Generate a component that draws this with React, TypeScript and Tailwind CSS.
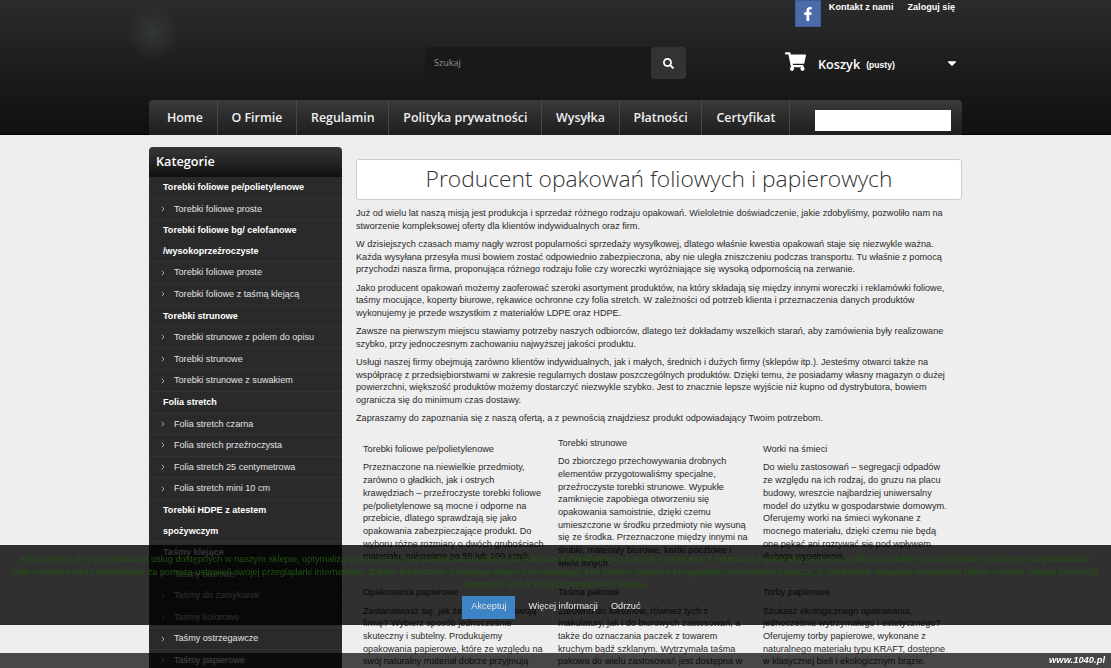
import { FaFacebookF, FaSearch, FaShoppingCart, FaCaretDown } from 'react-icons/fa';
import { ChevronRight } from 'lucide-react';

const NAV = ['Home', 'O Firmie', 'Regulamin', 'Polityka prywatności', 'Wysyłka', 'Płatności', 'Certyfikat'];

const CATEGORIES: { label: string; top?: boolean }[] = [
	{ label: 'Torebki foliowe pe/polietylenowe', top: true },
	{ label: 'Torebki foliowe proste' },
	{ label: 'Torebki foliowe bg/ celofanowe /wysokoprzeźroczyste', top: true },
	{ label: 'Torebki foliowe proste' },
	{ label: 'Torebki foliowe z taśmą klejącą' },
	{ label: 'Torebki strunowe', top: true },
	{ label: 'Torebki strunowe z polem do opisu' },
	{ label: 'Torebki strunowe' },
	{ label: 'Torebki strunowe z suwakiem' },
	{ label: 'Folia stretch', top: true },
	{ label: 'Folia stretch czarna' },
	{ label: 'Folia stretch przeźroczysta' },
	{ label: 'Folia stretch 25 centymetrowa' },
	{ label: 'Folia stretch mini 10 cm' },
	{ label: 'Torebki HDPE z atestem spożywczym', top: true },
	{ label: 'Taśmy klejące', top: true },
	{ label: 'Taśmy biurowe' },
	{ label: 'Taśmy do zamykarek' },
	{ label: 'Taśmy kolorowe' },
	{ label: 'Taśmy ostrzegawcze' },
	{ label: 'Taśmy papierowe' },
];

const INTRO = [
	'Już od wielu lat naszą misją jest produkcja i sprzedaż różnego rodzaju opakowań. Wieloletnie doświadczenie, jakie zdobyliśmy, pozwoliło nam na stworzenie kompleksowej oferty dla klientów indywidualnych oraz firm.',
	'W dzisiejszych czasach mamy nagły wzrost popularności sprzedaży wysyłkowej, dlatego właśnie kwestia opakowań staje się niezwykle ważna. Każda wysyłana przesyła musi bowiem zostać odpowiednio zabezpieczona, aby nie uległa zniszczeniu podczas transportu. Tu właśnie z pomocą przychodzi nasza firma, proponująca różnego rodzaju folie czy woreczki wyróżniające się wysoką odpornością na zerwanie.',
	'Jako producent opakowań możemy zaoferować szeroki asortyment produktów, na który składają się między innymi woreczki i reklamówki foliowe, taśmy mocujące, koperty biurowe, rękawice ochronne czy folia stretch. W zależności od potrzeb klienta i przeznaczenia danych produktów wykonujemy je przede wszystkim z materiałów LDPE oraz HDPE.',
	'Zawsze na pierwszym miejscu stawiamy potrzeby naszych odbiorców, dlatego też dokładamy wszelkich starań, aby zamówienia były realizowane szybko, przy jednoczesnym zachowaniu najwyższej jakości produktu.',
	'Usługi naszej firmy obejmują zarówno klientów indywidualnych, jak i małych, średnich i dużych firmy (sklepów itp.). Jesteśmy otwarci także na współpracę z przedsiębiorstwami w zakresie regularnych dostaw poszczególnych produktów. Dzięki temu, że posiadamy własny magazyn o dużej powierzchni, większość produktów możemy dostarczyć niezwykle szybko. Jest to znacznie lepsze wyjście niż kupno od dystrybutora, bowiem ogranicza się do minimum czas dostawy.',
	'Zapraszamy do zapoznania się z naszą ofertą, a z pewnością znajdziesz produkt odpowiadający Twoim potrzebom.',
];

const PRODUCTS = [
	{
		title: 'Torebki foliowe pe/polietylenowe',
		text: 'Przeznaczone na niewielkie przedmioty, zarówno o gładkich, jak i ostrych krawędziach – przeźroczyste torebki foliowe pe/polietylenowe są mocne i odporne na przebicie, dlatego sprawdzają się jako opakowania zabezpieczające produkt. Do wyboru różne rozmiary o dwóch grubościach materiału, pakowane po 50 lub 100 sztuk.',
	},
	{
		title: 'Torebki strunowe',
		text: 'Do zbiorczego przechowywania drobnych elementów przygotowaliśmy specjalne, przeźroczyste torebki strunowe. Wypukłe zamknięcie zapobiega otworzeniu się opakowania samoistnie, dzięki czemu umieszczone w środku przedmioty nie wysuną się ze środka. Przeznaczone między innymi na śrubki, materiały biurowe, kartki pocztowe i wiele innych.',
	},
	{
		title: 'Worki na śmieci',
		text: 'Do wielu zastosowań – segregacji odpadów ze względu na ich rodzaj, do gruzu na placu budowy, wreszcie najbardziej uniwersalny model do użytku w gospodarstwie domowym. Oferujemy worki na śmieci wykonane z mocnego materiału, dzięki czemu nie będą one pękać ani rozrywać się pod wpływem dużego wypełnienia.',
	},
	{
		title: 'Opakowania papierowe',
		text: 'Zastanawiasz się, jak zareklamować swoją firmę? Wybierz sposób jednocześnie skuteczny i subtelny. Produkujemy opakowania papierowe, które ze względu na swój naturalny materiał dobrze przyjmują nadruk z logo.',
	},
	{
		title: 'Taśma pakowa',
		text: 'Zarówno do kartonów, również tych z makulatury, jak i do biurowych zastosowań, a także do oznaczania paczek z towarem kruchym bądź szklanym. Wytrzymała taśma pakowa do wielu zastosowań jest dostępna w wielu wariantach.',
	},
	{
		title: 'Torby papierowe',
		text: 'Szukasz ekologicznego opakowania, jednocześnie wytrzymałego i estetycznego? Oferujemy torby papierowe, wykonane z naturalnego materiału typu KRAFT, dostępne w klasycznej bieli i ekologicznym brązie.',
	},
];

const arial = "font-['Liberation_Sans',Arial,sans-serif]";
const openSans = "font-['Open_Sans',sans-serif]";

const Header = () => (
	<header className="relative h-[135px] border-b border-black bg-gradient-to-b from-[#2b2b2b] to-[#101010]">
		<div className="absolute left-[125px] top-[5px] h-[55px] w-[55px] rounded-full bg-[radial-gradient(circle,#333835_0%,transparent_70%)]" />
		<div className="relative mx-auto w-[813px]">
			<div className={`flex h-[47px] items-start justify-end ${arial}`}>
				<div className="flex h-[27px] w-[26px] items-center justify-center border border-[#3f5c98] bg-[#4b6aa8] text-white">
					<FaFacebookF className="h-[14px] w-[14px]" />
				</div>
				<div className="flex h-[15px] items-center whitespace-nowrap text-[9.1px] font-bold text-white">
					<span className="border-r border-[#2c2c2c] pl-[8px] pr-[7px] leading-[15px]">Kontakt z nami</span>
					<span className="border-r border-[#2c2c2c] pl-[6px] pr-[6px] leading-[15px]">Zaloguj się</span>
				</div>
			</div>
			<div className="flex h-[53px] items-start">
				<div className="ml-[276px] flex h-[32px] w-[226px] items-center rounded-l-[4px] bg-[#191919] pl-[9px] text-[9px] text-[#8a8a8a]">
					Szukaj
				</div>
				<div className="flex h-[32px] w-[35px] items-center justify-center rounded-[4px] bg-[#333333] text-white">
					<FaSearch className="h-[11px] w-[11px]" />
				</div>
				<div className="ml-[99px] flex h-[32px] w-[172px] items-center text-white">
					<FaShoppingCart className="mb-[3px] h-[19px] w-[21px]" />
					<span className={`ml-[12px] mt-[3px] text-[12.7px] font-semibold ${openSans}`}>Koszyk</span>
					<span className={`ml-[6px] mt-[5px] text-[8.6px] font-bold ${arial}`}>(pusty)</span>
					<FaCaretDown className="ml-auto mb-[1px] h-[14px] w-[10px]" />
				</div>
			</div>
			<nav className="flex h-[35px] items-stretch rounded-t-[4px] bg-gradient-to-b from-[#3a3a3a] to-[#1e1e1e]">
				{NAV.map((item, i) => (
					<a
						key={item}
						className={`flex items-center whitespace-nowrap border-r border-[#484848] pr-[13.7px] pt-[2px] text-[12.4px] font-semibold text-[#f0f0f0] ${openSans} ${i === 0 ? 'pl-[18px]' : 'pl-[14px]'}`}
					>
						{item}
					</a>
				))}
				<div className="ml-[25px] mt-[10px] h-[21px] w-[136px] bg-white" />
			</nav>
		</div>
	</header>
);

const Sidebar = () => (
	<aside className={`w-[193px] shrink-0 ${arial}`}>
		<div className={`flex h-[30px] items-center rounded-t-[4px] bg-gradient-to-b from-[#383838] to-[#111111] pl-[7px] text-[12.7px] font-semibold text-white ${openSans}`}>
			Kategorie
		</div>
		<ul className="bg-[#2a2a2a]">
			{CATEGORIES.map((cat, i) => (
				<li
					key={i}
					className={
						cat.top
							? 'border-b border-[#333333] pl-[14px] pr-[28px] text-[9.05px] font-bold leading-[20.6px] text-white'
							: 'flex items-center border-b border-[#333333] pl-[10px] text-[9.1px] leading-[20.6px] text-[#e2e2e2]'
					}
				>
					{!cat.top && <ChevronRight className="mr-[7px] h-[8px] w-[8px]" strokeWidth={2} />}
					{cat.label}
				</li>
			))}
		</ul>
	</aside>
);

const Content = () => (
	<main className={`mt-[12px] w-[606px] text-[9.15px] leading-[12.7px] text-[#2a2a2a] ${arial}`}>
		<h1 className={`flex h-[41px] items-center justify-center rounded-[3px] border border-[#cccccc] bg-white text-[22.8px] font-light text-[#333333] ${openSans}`}>
			Producent opakowań foliowych i papierowych
		</h1>
		<div className="mt-[7px] flex flex-col gap-[5.5px] pr-[16px]">
			{INTRO.map((p) => (
				<p key={p}>{p}</p>
			))}
		</div>
		<div className="mt-[12px] grid grid-cols-[195px_205px_196px] items-center gap-y-[17px]">
			{PRODUCTS.map((item, i) => (
				<div key={item.title} className={i > 2 ? 'self-start pl-[7px] pr-[5px]' : 'pl-[7px] pr-[5px]'}>
					<p className="mb-[5.4px]">{item.title}</p>
					<p>{item.text}</p>
				</div>
			))}
		</div>
	</main>
);

const CookieBar = () => (
	<div className={`fixed inset-x-0 top-[545px] h-[80px] bg-black/80 px-[12px] pt-[8px] text-center text-[9.2px] ${arial}`}>
		<p className="leading-[12.5px] text-[#1e5410]">
			Informujemy, iż w celu realizacji usług dostępnych w naszym sklepie, optymalizacji jego treści oraz dostosowania sklepu do Państwa indywidualnych potrzeb korzystamy z informacji zapisanych za pomocą plików cookies na urządzeniach końcowych użytkowników. Pliki cookies można kontrolować za pomocą ustawień swojej przeglądarki internetowej. Dalsze korzystanie z naszego sklepu internetowego, bez zmiany ustawień przeglądarki internetowej oznacza, iż użytkownik akceptuje stosowanie plików cookies. Więcej informacji zawartych jest w polityce prywatności sklepu.
		</p>
		<div className="mt-[5px] flex items-center justify-center pr-[8px] text-[#e6e6e6]">
			<button className="h-[23px] w-[53px] bg-[#3c84c6]">Akceptuj</button>
			<span className="ml-[13px]">Więcej informacji</span>
			<span className="ml-[13px]">Odrzuć</span>
		</div>
	</div>
);

const App = () => (
	<div className="relative h-[668px] overflow-hidden bg-[#eeeeee]">
		<Header />
		<div className="mx-auto mt-[12px] flex w-[813px] gap-[14px]">
			<Sidebar />
			<Content />
		</div>
		<CookieBar />
		<div className={`fixed inset-x-0 top-[653px] flex h-[15px] items-center justify-end bg-black/70 pr-[6px] text-[9.4px] font-bold italic text-white ${arial}`}>
			www.1040.pl
		</div>
	</div>
);

export default App;
